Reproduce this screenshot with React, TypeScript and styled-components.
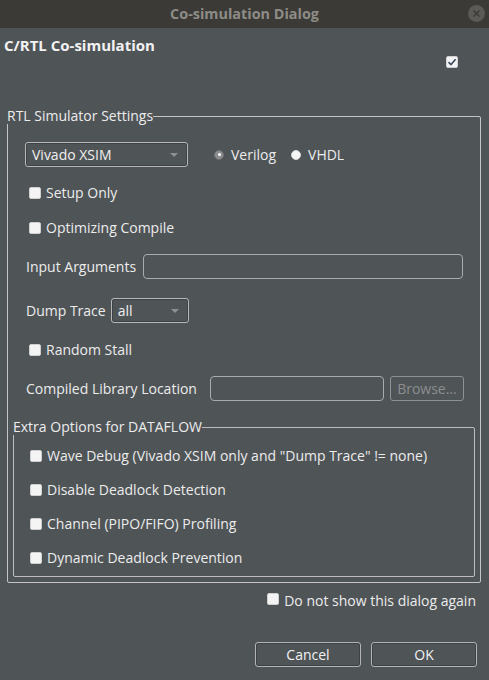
import styled, { createGlobalStyle } from 'styled-components'

const Global = createGlobalStyle`
  html, body {
    margin: 0;
    padding: 0;
    background: #4f5457;
  }
  * {
    box-sizing: border-box;
  }
`

const Window = styled.div`
  width: 489px;
  height: 680px;
  background: #4f5457;
  color: #ececec;
  font-family: 'Open Sans', 'DejaVu Sans', sans-serif;
  font-size: 14px;
  line-height: 16px;
  display: flex;
  flex-direction: column;
  overflow: hidden;
`

const TitleBar = styled.div`
  height: 28px;
  flex: none;
  background: #3b3a36;
  display: flex;
  align-items: center;
  justify-content: center;
  position: relative;
  color: #8e8c87;
  font-weight: bold;
  font-size: 14.4px;
`

const CloseButton = styled.span`
  position: absolute;
  right: 4px;
  top: 5px;
  width: 17px;
  height: 17px;
  border-radius: 50%;
  background: #5b5a56;
  display: flex;
  align-items: center;
  justify-content: center;
`

const Heading = styled.div`
  margin: 9px 0 0 4px;
  font-weight: bold;
  font-size: 15px;
  color: #f2f2f2;
`

const TopCheck = styled.div`
  display: flex;
  justify-content: flex-end;
  padding-right: 31px;
  margin-top: 3px;
`

const Group = styled.fieldset<{ $inner?: boolean }>`
  margin: ${(p) => (p.$inner ? '18px 5px 5px 5px' : '40px 8px 0 7px')};
  padding: ${(p) => (p.$inner ? '0 0 6px 0' : '0')};
  border: 1px solid ${(p) => (p.$inner ? '#bdbdbd' : '#c4c4c4')};
  border-radius: 2px;
  min-width: 0;
`

const Legend = styled.legend`
  padding: 0;
  margin-left: -1px;
  color: #ececec;
  line-height: 16px;
`

const Row = styled.div<{ $top: number; $indent: number }>`
  display: flex;
  align-items: center;
  height: 25px;
  margin-top: ${(p) => p.$top}px;
  padding-left: ${(p) => p.$indent}px;
`

const Select = styled.div<{ $width: number }>`
  width: ${(p) => p.$width}px;
  height: 25px;
  flex: none;
  border: 1px solid #b7b7b7;
  border-radius: 3px;
  box-shadow: inset 0 0 0 1px #3f4345;
  display: flex;
  align-items: center;
  justify-content: space-between;
  padding: 0 9px 0 6px;
  color: #f0f0f0;
`

const Arrow = styled.span`
  width: 0;
  height: 0;
  border-left: 4px solid transparent;
  border-right: 4px solid transparent;
  border-top: 4px solid #8d8f90;
`

const Radio = styled.span<{ $on?: boolean }>`
  width: 10px;
  height: 10px;
  border-radius: 50%;
  flex: none;
  background: ${(p) => (p.$on ? '#8b8d8e' : '#f6f6f6')};
  border: 1px solid ${(p) => (p.$on ? '#6f7173' : '#d8d8d8')};
  display: flex;
  align-items: center;
  justify-content: center;
  &::after {
    content: '';
    width: 3px;
    height: 3px;
    border-radius: 50%;
    background: ${(p) => (p.$on ? '#ffffff' : 'transparent')};
  }
`

const RadioLabel = styled.span<{ $gap: number }>`
  margin-left: 7px;
  margin-right: ${(p) => p.$gap}px;
`

const Spacer = styled.span<{ $width: number }>`
  width: ${(p) => p.$width}px;
  flex: none;
`

const Box = styled.span`
  width: 12px;
  height: 12px;
  flex: none;
  border-radius: 2px;
  background: #f4f4f4;
  border: 1px solid #d0d0d0;
  display: flex;
  align-items: center;
  justify-content: center;
`

const CheckText = styled.span`
  margin-left: 5px;
  white-space: nowrap;
`

const Label = styled.span<{ $gap?: number }>`
  margin-right: ${(p) => p.$gap ?? 7}px;
  white-space: nowrap;
`

const Field = styled.div<{ $width: number }>`
  width: ${(p) => p.$width}px;
  height: 25px;
  flex: none;
  border: 1px solid #a9abac;
  border-radius: 4px;
`

const Button = styled.div<{ $width: number; $disabled?: boolean }>`
  width: ${(p) => p.$width}px;
  height: 25px;
  flex: none;
  border: 1px solid ${(p) => (p.$disabled ? '#8f9192' : '#b4b4b4')};
  border-radius: 3px;
  box-shadow: ${(p) => (p.$disabled ? 'none' : 'inset 0 0 0 1px #3e4244')};
  display: flex;
  align-items: center;
  justify-content: center;
  color: ${(p) => (p.$disabled ? '#8c8e8f' : '#f2f2f2')};
`

const Footer = styled.div`
  display: flex;
  justify-content: flex-end;
  padding-right: 13px;
  margin-top: 10px;
`

const Buttons = styled.div`
  display: flex;
  justify-content: flex-end;
  gap: 10px;
  padding-right: 12px;
  margin-top: 33px;
`

function Check({ label, checked }: { label?: string; checked?: boolean }) {
  return (
    <>
      <Box>
        {checked && (
          <svg width="10" height="10" viewBox="0 0 10 10">
            <path d="M1.5 5.2 L4 7.6 L8.6 2.2" fill="none" stroke="#3a4a5c" strokeWidth="1.6" />
          </svg>
        )}
      </Box>
      {label && <CheckText>{label}</CheckText>}
    </>
  )
}

export default function App() {
  return (
    <Window>
      <Global />
      <TitleBar>
        Co-simulation Dialog
        <CloseButton>
          <svg width="7" height="7" viewBox="0 0 7 7">
            <path d="M0.5 0.5 L6.5 6.5 M6.5 0.5 L0.5 6.5" stroke="#3b3a36" strokeWidth="1.4" />
          </svg>
        </CloseButton>
      </TitleBar>
      <Heading>C/RTL Co-simulation</Heading>
      <TopCheck>
        <Check checked />
      </TopCheck>

      <Group>
        <Legend>RTL Simulator Settings</Legend>
        <Row $top={18} $indent={17}>
          <Select $width={163}>
            Vivado XSIM
            <Arrow />
          </Select>
          <Spacer $width={26} />
          <Radio $on />
          <RadioLabel $gap={15}>Verilog</RadioLabel>
          <Radio />
          <RadioLabel $gap={0}>VHDL</RadioLabel>
        </Row>
        <Row $top={13} $indent={21}>
          <Check label="Setup Only" />
        </Row>
        <Row $top={10} $indent={21}>
          <Check label="Optimizing Compile" />
        </Row>
        <Row $top={14} $indent={18}>
          <Label>Input Arguments</Label>
          <Field $width={320} />
        </Row>
        <Row $top={19} $indent={18}>
          <Label $gap={5}>Dump Trace</Label>
          <Select $width={78}>
            all
            <Arrow />
          </Select>
        </Row>
        <Row $top={14} $indent={21}>
          <Check label="Random Stall" />
        </Row>
        <Row $top={14} $indent={18}>
          <Label $gap={13}>Compiled Library Location</Label>
          <Field $width={174} />
          <Spacer $width={6} />
          <Button $width={74} $disabled>
            Browse...
          </Button>
        </Row>

        <Group $inner>
          <Legend>Extra Options for DATAFLOW</Legend>
          <Row $top={8} $indent={16}>
            <Check label={'Wave Debug (Vivado XSIM only and "Dump Trace" != none)'} />
          </Row>
          <Row $top={9} $indent={16}>
            <Check label="Disable Deadlock Detection" />
          </Row>
          <Row $top={9} $indent={16}>
            <Check label="Channel (PIPO/FIFO) Profiling" />
          </Row>
          <Row $top={9} $indent={16}>
            <Check label="Dynamic Deadlock Prevention" />
          </Row>
        </Group>
      </Group>

      <Footer>
        <Check label="Do not show this dialog again" />
      </Footer>
      <Buttons>
        <Button $width={106}>Cancel</Button>
        <Button $width={106}>OK</Button>
      </Buttons>
    </Window>
  )
}
